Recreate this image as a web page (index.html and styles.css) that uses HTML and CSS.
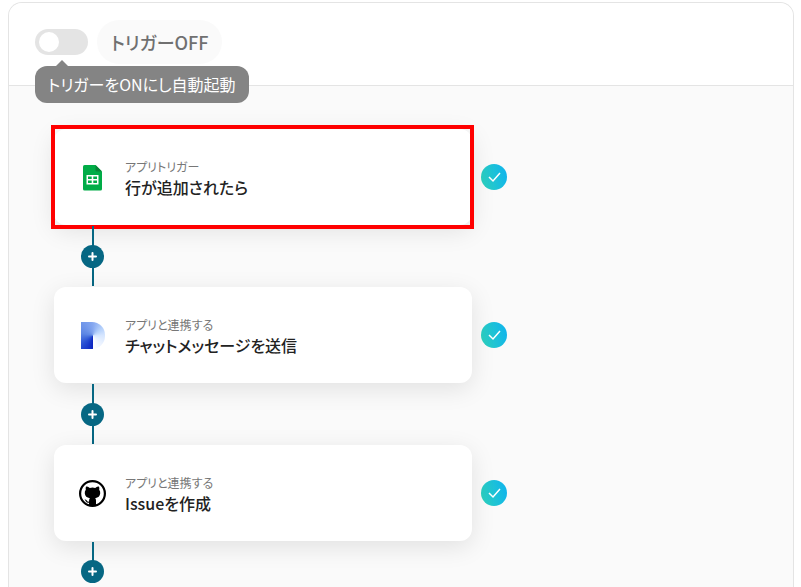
FILE: index.html
```html
<!DOCTYPE html>
<html lang="ja">
<head>
    <meta charset="UTF-8">
    <meta name="viewport" content="width=device-width, initial-scale=1.0">
    <title>フローボット</title>
    <link rel="stylesheet" href="styles.css">
</head>
<body>

    <main class="panel">
        <!-- Trigger switch -->
        <header class="panel-header">
            <div class="switch-wrap">
                <input type="checkbox" class="switch" id="trigger" aria-describedby="trigger-tip">
                <div class="tooltip" id="trigger-tip" role="tooltip">トリガーをONにし自動起動</div>
            </div>
            <label class="status" for="trigger">トリガーOFF</label>
        </header>

        <!-- Flow steps -->
        <div class="flow">
            <div class="step">
                <div class="card selected">
                    <svg class="icon" viewBox="0 0 27 27" aria-hidden="true">
                        <path d="M5.6 1H16.500l6.500 6.500v17.400a1.600 1.600 0 0 1-1.600 1.600H5.600A1.600 1.600 0 0 1 4 24.900V2.600A1.600 1.600 0 0 1 5.600 1z" fill="#00ac47"/>
                        <path d="M16.500 1L23 7.500H17.800A1.300 1.300 0 0 1 16.500 6.200z" fill="#088438"/>
                        <path d="M7.500 11h12v9.500H7.500zM9 12.500v2.500h3.700v-2.500zM14.300 12.500v2.500H18v-2.500zM9 16.500V19h3.700v-2.500zM14.300 16.500V19H18v-2.500z" fill="#fff" fill-rule="evenodd"/>
                    </svg>
                    <div class="text">
                        <p class="kind">アプリトリガー</p>
                        <h2>行が追加されたら</h2>
                    </div>
                </div>
                <svg class="check" viewBox="0 0 26 26" role="img" aria-label="設定済み"><path d="M8 13l4 4 7-8"/></svg>
            </div>

            <div class="connector">
                <button type="button" class="add" aria-label="追加">
                    <svg viewBox="0 0 9 9"><path d="M4.500 1v7M1 4.500h7"/></svg>
                </button>
            </div>

            <div class="step">
                <div class="card">
                    <span class="icon"><span class="d-logo"></span></span>
                    <div class="text">
                        <p class="kind">アプリと連携する</p>
                        <h2>チャットメッセージを送信</h2>
                    </div>
                </div>
                <svg class="check" viewBox="0 0 26 26" role="img" aria-label="設定済み"><path d="M8 13l4 4 7-8"/></svg>
            </div>

            <div class="connector">
                <button type="button" class="add" aria-label="追加">
                    <svg viewBox="0 0 9 9"><path d="M4.500 1v7M1 4.500h7"/></svg>
                </button>
            </div>

            <div class="step">
                <div class="card">
                    <svg class="icon" viewBox="0 0 27 27" aria-hidden="true">
                        <circle cx="13.500" cy="13.500" r="12.400" fill="none" stroke="#000" stroke-width="2.200"/>
                        <path d="M7 6.500q2 0 3.800 1.400a12 12 0 0 1 5.400 0Q18 6.500 20 6.500q.6 1.700.2 3.200Q21.500 11.200 21.200 13.600 20.700 17.600 16.200 18.200 17 19 17 20.500V26h-7v-3.200Q7.800 23.200 6.800 21.200 6.200 20 5.500 19.500q1.500-.3 2.500 1.300.7 1.200 2 .7 0-2.300.9-3.300Q6.200 17.600 5.800 13.600 5.500 11.200 6.800 9.700 6.400 8.200 7 6.500z" fill="#000"/>
                    </svg>
                    <div class="text">
                        <p class="kind">アプリと連携する</p>
                        <h2>Issueを作成</h2>
                    </div>
                </div>
                <svg class="check" viewBox="0 0 26 26" role="img" aria-label="設定済み"><path d="M8 13l4 4 7-8"/></svg>
            </div>

            <div class="connector last">
                <button type="button" class="add" aria-label="追加">
                    <svg viewBox="0 0 9 9"><path d="M4.500 1v7M1 4.500h7"/></svg>
                </button>
            </div>
        </div>
    </main>

</body>
</html>
```
FILE: styles.css
```css
* {
    margin: 0;
    padding: 0;
    box-sizing: border-box;
}

body {
    font-family: "Noto Sans CJK JP", sans-serif;
    font-feature-settings: "palt";
    background-color: #fff;
    color: #222;
    padding: 2px 7px 0 8px;
}

.panel {
    min-height: calc(100vh - 2px);
    border: 1px solid #e4e4e4;
    border-bottom: none;
    border-radius: 14px 14px 0 0;
    background-color: #fafafa;
}

/* Header */
.panel-header {
    display: flex;
    align-items: center;
    gap: 9px;
    padding: 17px 26px 21px;
    background-color: #fff;
    border-bottom: 1px solid #e4e4e4;
    border-radius: 13px 13px 0 0;
}

.switch-wrap {
    position: relative;
    display: flex;
}

.switch {
    appearance: none;
    width: 53px;
    height: 26px;
    padding: 3px 4px;
    border-radius: 13px;
    background-color: #e4e4e4;
    cursor: pointer;
}

.switch::before {
    content: "";
    display: block;
    width: 20px;
    height: 20px;
    border-radius: 50%;
    background-color: #fff;
}

.switch:checked {
    background-color: #066783;
}

.switch:checked::before {
    margin-left: auto;
}

.tooltip {
    position: absolute;
    top: 37px;
    left: 0;
    padding: 0 13px;
    border-radius: 12px;
    background-color: #848484;
    color: #fff;
    font-size: 16px;
    line-height: 37px;
    white-space: nowrap;
}

.tooltip::before {
    content: "";
    position: absolute;
    top: -6px;
    left: 21px;
    border: 6px solid transparent;
    border-top: none;
    border-bottom-color: #848484;
}

.status {
    padding: 0 14px;
    border-radius: 22px;
    background-color: #fafafa;
    color: #707070;
    font-size: 18px;
    font-weight: 500;
    line-height: 44px;
}

/* Flow */
.flow {
    padding: 43px 45px 0;
}

.step {
    display: flex;
    align-items: center;
    gap: 9px;
}

.card {
    position: relative;
    display: flex;
    flex: 1;
    align-items: center;
    gap: 19px;
    max-width: 418px;
    height: 96px;
    padding: 0 25px;
    border-radius: 12px;
    background-color: #fff;
    box-shadow: 0 6px 24px rgba(0, 0, 0, 0.1);
}

.card.selected::after {
    content: "";
    position: absolute;
    inset: -4px -2px -4px -3px;
    border: 4px solid #f00;
}

.icon {
    display: flex;
    flex: none;
    justify-content: center;
    width: 27px;
    height: 27px;
}

.d-logo {
    width: 24px;
    height: 27px;
    border-radius: 0 13px 13px 0;
    background: conic-gradient(from 180deg at 50% 50%, #0a22c0, #2a52d4 50deg, #5c86e4 100deg, #86a8f0 180deg, #b4d0fb 230deg, #d6e6ff 270deg, #fbfcff 350deg);
}

.kind {
    color: #777;
    font-size: 12px;
    line-height: 19px;
}

h2 {
    font-size: 16px;
    font-weight: 500;
    line-height: 22px;
}

.check {
    flex: none;
    width: 26px;
    height: 26px;
    border-radius: 50%;
    background: linear-gradient(75deg, #2fd3bb, #0db2f0);
}

.check path {
    fill: none;
    stroke: #fff;
    stroke-width: 1.5;
}

/* Line and add button between two steps */
.connector {
    position: relative;
    display: flex;
    align-items: center;
    height: 62px;
    padding-left: 27px;
    background: linear-gradient(#066783, #066783) 38px 1px / 2px 60px no-repeat;
}

.connector.last {
    height: 42px;
    align-items: flex-end;
    background-size: 2px 30px;
}

.add {
    display: flex;
    align-items: center;
    justify-content: center;
    width: 23px;
    height: 23px;
    border: none;
    border-radius: 50%;
    background-color: #066783;
    cursor: pointer;
}

.add svg {
    width: 9px;
    height: 9px;
}

.add path {
    stroke: #fff;
    stroke-width: 2;
    stroke-linecap: round;
}
```
